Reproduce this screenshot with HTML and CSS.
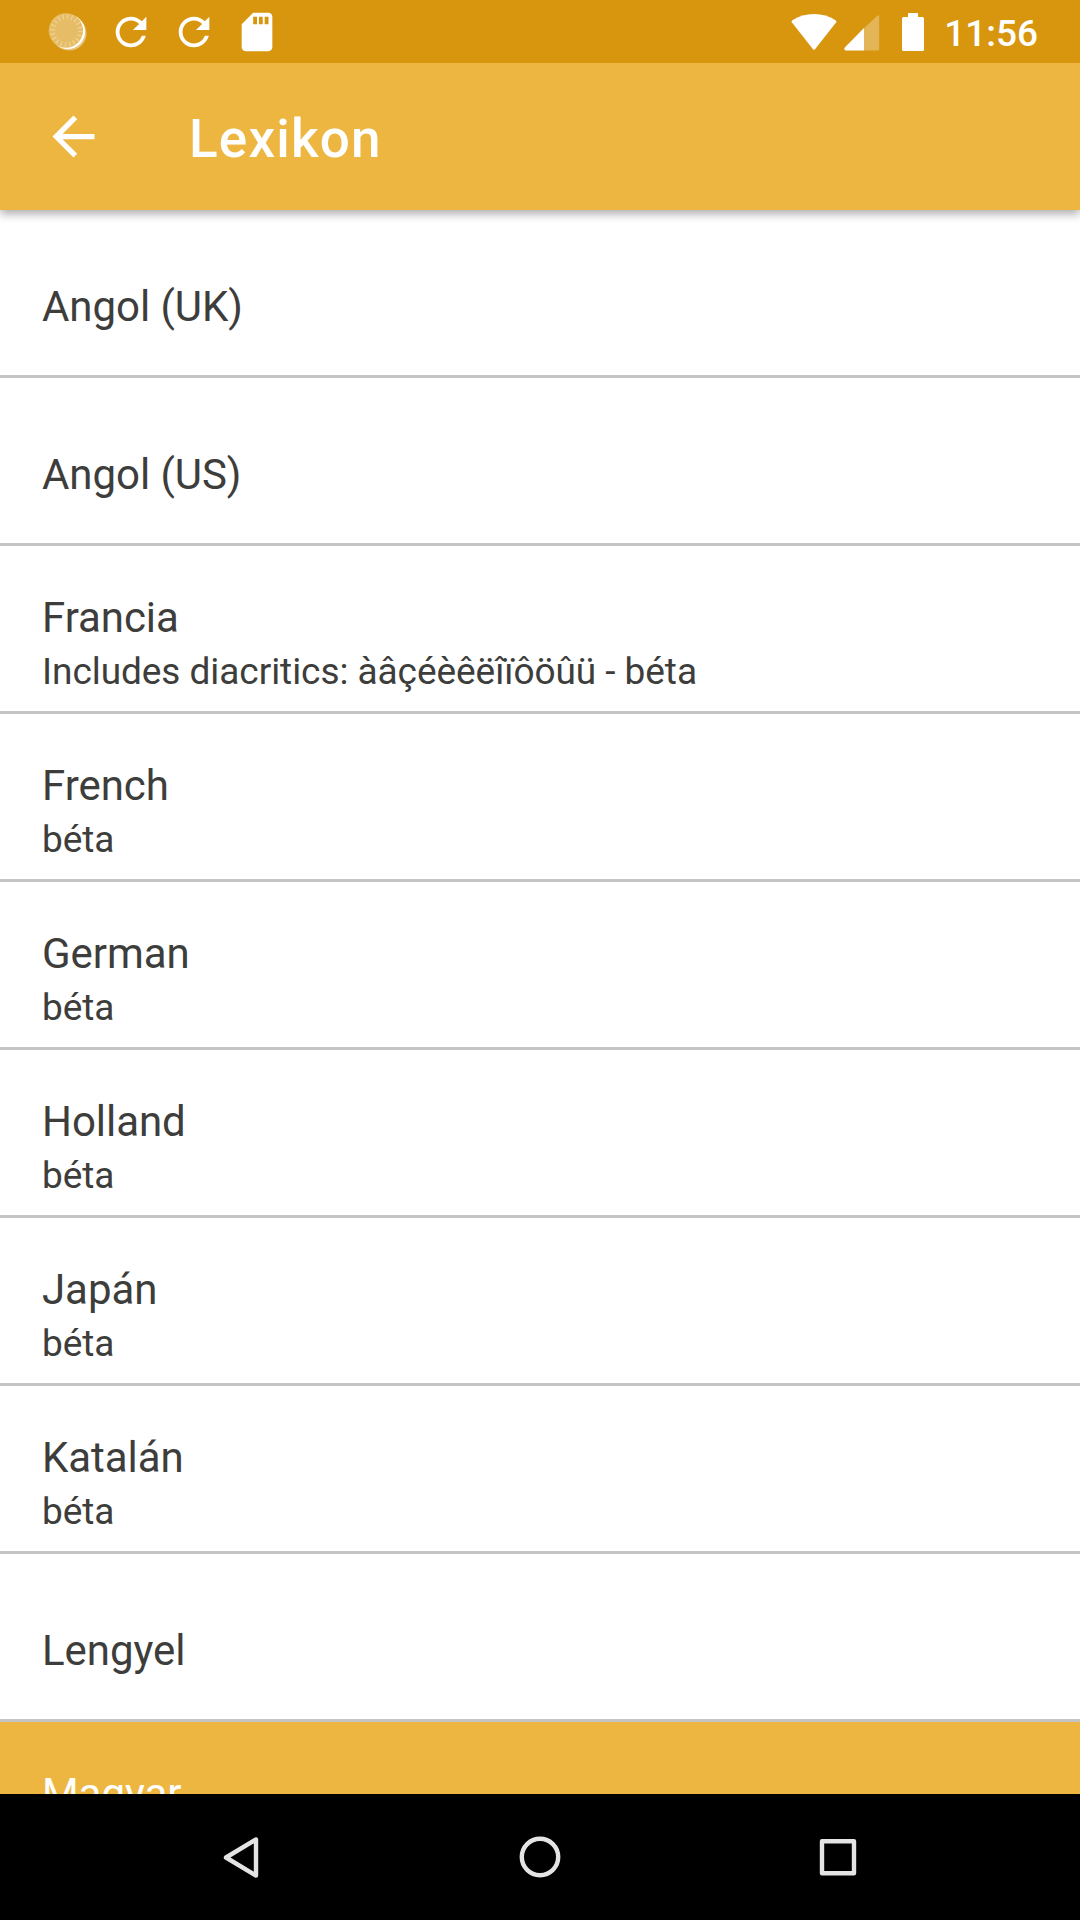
FILE: index.html
```html
<!DOCTYPE html>
<html lang="hu">
<head>
<meta charset="utf-8">
<title>Lexikon</title>
<link rel="stylesheet" href="styles.css">
</head>
<body>
<div class="screen">
  <div class="status-bar">
    <div class="notifications">
      <svg class="notification" viewBox="0 0 46 46">
        <circle cx="24.200" cy="24.300" r="17.300" fill="#fff" opacity=".45"/>
        <circle cx="22.800" cy="22.700" r="17.300" fill="#fff"/>
        <circle cx="20.900" cy="21.500" r="17.200" fill="#e6bd66"/>
        <circle cx="21.400" cy="21.700" r="14" fill="none" stroke="#edd08f" stroke-width="5" stroke-dasharray="1.400 2.998"/>
      </svg>
      <svg class="notification" viewBox="0 0 24 24"><path fill="#fff" d="M17.65 6.35C16.2 4.9 14.21 4 12 4c-4.42 0-7.99 3.58-7.99 8s3.57 8 7.99 8c3.73 0 6.84-2.55 7.73-6h-2.08c-.82 2.33-3.04 4-5.65 4-3.31 0-6-2.69-6-6s2.69-6 6-6c1.66 0 3.14.69 4.22 1.78L13 11h7V4l-2.35 2.35z"/></svg>
      <svg class="notification" viewBox="0 0 24 24"><path fill="#fff" d="M17.65 6.35C16.2 4.9 14.21 4 12 4c-4.42 0-7.99 3.58-7.99 8s3.57 8 7.99 8c3.73 0 6.84-2.55 7.73-6h-2.08c-.82 2.33-3.04 4-5.65 4-3.31 0-6-2.69-6-6s2.69-6 6-6c1.66 0 3.14.69 4.22 1.78L13 11h7V4l-2.35 2.35z"/></svg>
      <svg class="notification" viewBox="0 0 24 24"><path fill="#fff" d="M18 2h-8L4.02 8 4 20c0 1.1.9 2 2 2h12c1.1 0 2-.9 2-2V4c0-1.1-.9-2-2-2zm-6 6h-2V4h2v4zm3 0h-2V4h2v4zm3 0h-2V4h2v4z"/></svg>
    </div>
    <div class="system">
      <svg class="wifi" viewBox="0 0 46 38"><path fill="#fff" d="M.8 9.2Q.2 8 1.4 7.2Q11 1 23 1T44.600 7.200Q45.800 8 45.200 9.200L24 36.300Q23 37.300 22 36.300Z"/></svg>
      <svg class="signal" viewBox="0 0 36 36"><path fill="#fff" opacity=".3" d="M20 13.200 33.200.700Q35.200-.500 35.200 2V34Q35.200 35.500 33.700 35.500H20Z"/><path fill="#fff" d="M20 12.900V35.500H1.700Q-.500 35 .800 32.500Z"/></svg>
      <svg class="battery" viewBox="0 0 22 38"><path fill="#fff" d="M6 0H16V4H20.500Q22 4 22 5.500V36.500Q22 38 20.500 38H1.500Q0 38 0 36.500V5.500Q0 4 1.500 4H6Z"/></svg>
      <span class="clock">11:56</span>
    </div>
  </div>
  <header class="app-bar">
    <svg class="back" viewBox="0 0 24 24"><path fill="#fff" d="M20 11H7.830l5.590-5.590L12 4l-8 8 8 8 1.410-1.410L7.830 13H20v-2z"/></svg>
    <h1 class="title">Lexikon</h1>
  </header>
  <main class="list">
    <div class="row single"><div class="name">Angol (UK)</div></div>
    <div class="row single"><div class="name">Angol (US)</div></div>
    <div class="row"><div class="name">Francia</div><div class="note">Includes diacritics: àâçéèêëîïôöûü - béta</div></div>
    <div class="row"><div class="name">French</div><div class="note">béta</div></div>
    <div class="row"><div class="name">German</div><div class="note">béta</div></div>
    <div class="row"><div class="name">Holland</div><div class="note">béta</div></div>
    <div class="row"><div class="name">Japán</div><div class="note">béta</div></div>
    <div class="row"><div class="name">Katalán</div><div class="note">béta</div></div>
    <div class="row single"><div class="name">Lengyel</div></div>
    <div class="row selected"><div class="name">Magyar</div></div>
  </main>
  <nav class="nav-bar">
    <svg class="nav-icon" viewBox="0 0 48 48"><path d="M38 6.500V42.500L8 24.500Z"/></svg>
    <svg class="nav-icon" viewBox="0 0 48 48"><circle cx="24" cy="24" r="18.200"/></svg>
    <svg class="nav-icon" viewBox="0 0 48 48"><rect x="8" y="8.200" width="32" height="32"/></svg>
  </nav>
</div>
</body>
</html>
```
FILE: styles.css
```css
* {
  box-sizing: border-box;
}

body {
  margin: 0;
  font-family: Roboto, sans-serif;
  background: #fff;
}

svg {
  display: block;
  flex: none;
}

.screen {
  display: flex;
  flex-direction: column;
  width: 1080px;
  height: 1920px;
  overflow: hidden;
}

.status-bar {
  flex: none;
  display: flex;
  justify-content: space-between;
  height: 63px;
  padding: 0 42px 0 45px;
  background: #d8960f;
  z-index: 2;
}

.notifications {
  display: flex;
  align-items: center;
  gap: 17px;
}

.notification {
  width: 46px;
  height: 46px;
}

.system {
  display: flex;
  align-items: center;
}

.wifi {
  width: 46px;
  height: 38px;
}

.signal {
  width: 36px;
  height: 36px;
  margin: 2px 22px 0 7px;
}

.battery {
  width: 22px;
  height: 38px;
}

.clock {
  margin-left: 20px;
  padding-top: 5px;
  font-size: 37px;
  font-weight: 500;
  line-height: 44px;
  color: #fff;
}

.app-bar {
  flex: none;
  display: flex;
  align-items: center;
  height: 147px;
  padding-left: 42px;
  background: #edb641;
  box-shadow: 0 4px 9px rgba(0, 0, 0, 0.33);
  z-index: 1;
}

.back {
  width: 63px;
  height: 63px;
}

.title {
  margin: 5px 0 0 84px;
  font-size: 53px;
  font-weight: 500;
  line-height: 62px;
  letter-spacing: 1.2px;
  color: #fff;
}

.list {
  flex: 1;
  min-height: 0;
  overflow: hidden;
}

.row {
  height: 168px;
  padding: 47px 42px 0;
  border-bottom: 3px solid #c4c4c4;
  color: #3d3d3b;
}

.row.single {
  padding-top: 72px;
}

.row.selected {
  background: #edb641;
  color: #fff;
}

.name {
  font-size: 42px;
  line-height: 50px;
  letter-spacing: -0.05px;
}

.note {
  margin-top: 7px;
  font-size: 37px;
  line-height: 44px;
  letter-spacing: -0.055px;
}

.nav-bar {
  flex: none;
  display: flex;
  align-items: center;
  justify-content: center;
  gap: 250px;
  height: 126px;
  background: #000;
}

.nav-icon {
  width: 48px;
  height: 48px;
  fill: none;
  stroke: #e4e4e4;
  stroke-width: 4.4;
  stroke-linejoin: round;
}
```
